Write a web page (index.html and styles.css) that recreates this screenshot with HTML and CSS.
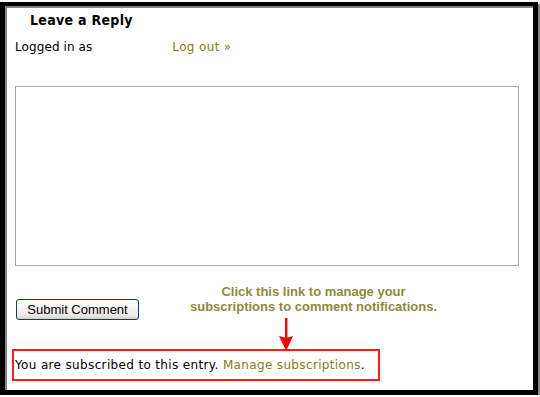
FILE: index.html
```html
<!DOCTYPE html>
<html lang="en">
<head>
  <meta charset="UTF-8">
  <title>Leave a Reply</title>
  <link rel="stylesheet" href="styles.css">
</head>
<body>

  <div class="frame">
    <h3 class="reply-title">Leave a Reply</h3>
    <p class="logged-in">Logged in as <a href="#" class="logout">Log out &raquo;</a></p>

    <textarea class="comment-box" name="comment"></textarea>

    <div class="submit-row">
      <button type="button" class="submit-btn">Submit Comment</button>
      <p class="note">Click this link to manage your<br>subscriptions to comment notifications.</p>
    </div>

    <!-- flèche d'annotation -->
    <svg class="arrow" width="16" height="34" viewBox="0 0 16 34">
      <rect x="7" y="0" width="2.4" height="22" fill="#ff0000"/>
      <polygon points="1,18 8.2,20 15,18 8.2,33" fill="#ff0000"/>
    </svg>

    <p class="subscribed">You are subscribed to this entry. <a href="#">Manage subscriptions</a>.</p>
  </div>

</body>
</html>
```

FILE: styles.css
```css
/* Style global */
body {
  margin: 0;
  background: #fff;
  font-family: "DejaVu Sans", Verdana, sans-serif;
  font-size: 12px;
  letter-spacing: 0.35px;
  color: #000;
}
a {
  color: #8c7812;
  text-decoration: none;
}
/* Cadre noir avec ombre */
.frame {
  position: relative;
  box-sizing: border-box;
  width: 538px;
  height: 393px;
  margin-top: 2px;
  padding: 6px 14px 0 10px;
  border: 5px solid #000;
  border-top-width: 4px;
  box-shadow: inset 2px 2px 0 #858585, 2px 2px 0 #858585;
}
.reply-title {
  margin: 0 0 0 15px;
  font-family: "DejaVu Sans Condensed", "DejaVu Sans", sans-serif;
  font-stretch: condensed;
  font-size: 14px;
  font-weight: bold;
  letter-spacing: 0.3px;
  line-height: 17px;
}
.logged-in {
  margin: 10px 0 0;
  line-height: 16px;
  letter-spacing: 0.1px;
}
.logout {
  margin-left: 76px;
  letter-spacing: 0.35px;
}
/* Zone de texte */
.comment-box {
  display: block;
  box-sizing: border-box;
  width: 504px;
  height: 180px;
  margin: 31px 0 0;
  border: 1px solid #a5acb2;
  resize: none;
}
.submit-row {
  display: flex;
  align-items: flex-start;
  margin-top: 18px;
}
.submit-btn {
  margin: 15px 0 0 1px;
  width: 123px;
  height: 21px;
  padding: 0;
  border: 1px solid #0c3d6e;
  border-radius: 3px;
  background: linear-gradient(#ffffff, #ecebe6 80%, #d6d0c5);
  font-family: "Liberation Sans", Arial, sans-serif;
  font-size: 13px;
  letter-spacing: 0;
  color: #000;
}
.note {
  margin: 0 0 0 42px;
  width: 265px;
  text-align: center;
  font-family: "Liberation Sans", Arial, sans-serif;
  font-weight: bold;
  font-size: 13px;
  letter-spacing: 0;
  line-height: 15px;
  color: #8e8a3b;
}
.arrow {
  position: absolute;
  left: 273px;
  top: 312px;
}
.subscribed {
  display: inline-block;
  margin: 29px 0 0 -3px;
  padding: 0 13px 0 1px;
  border: 2px solid #ff1a1a;
  line-height: 28px;
}
```
